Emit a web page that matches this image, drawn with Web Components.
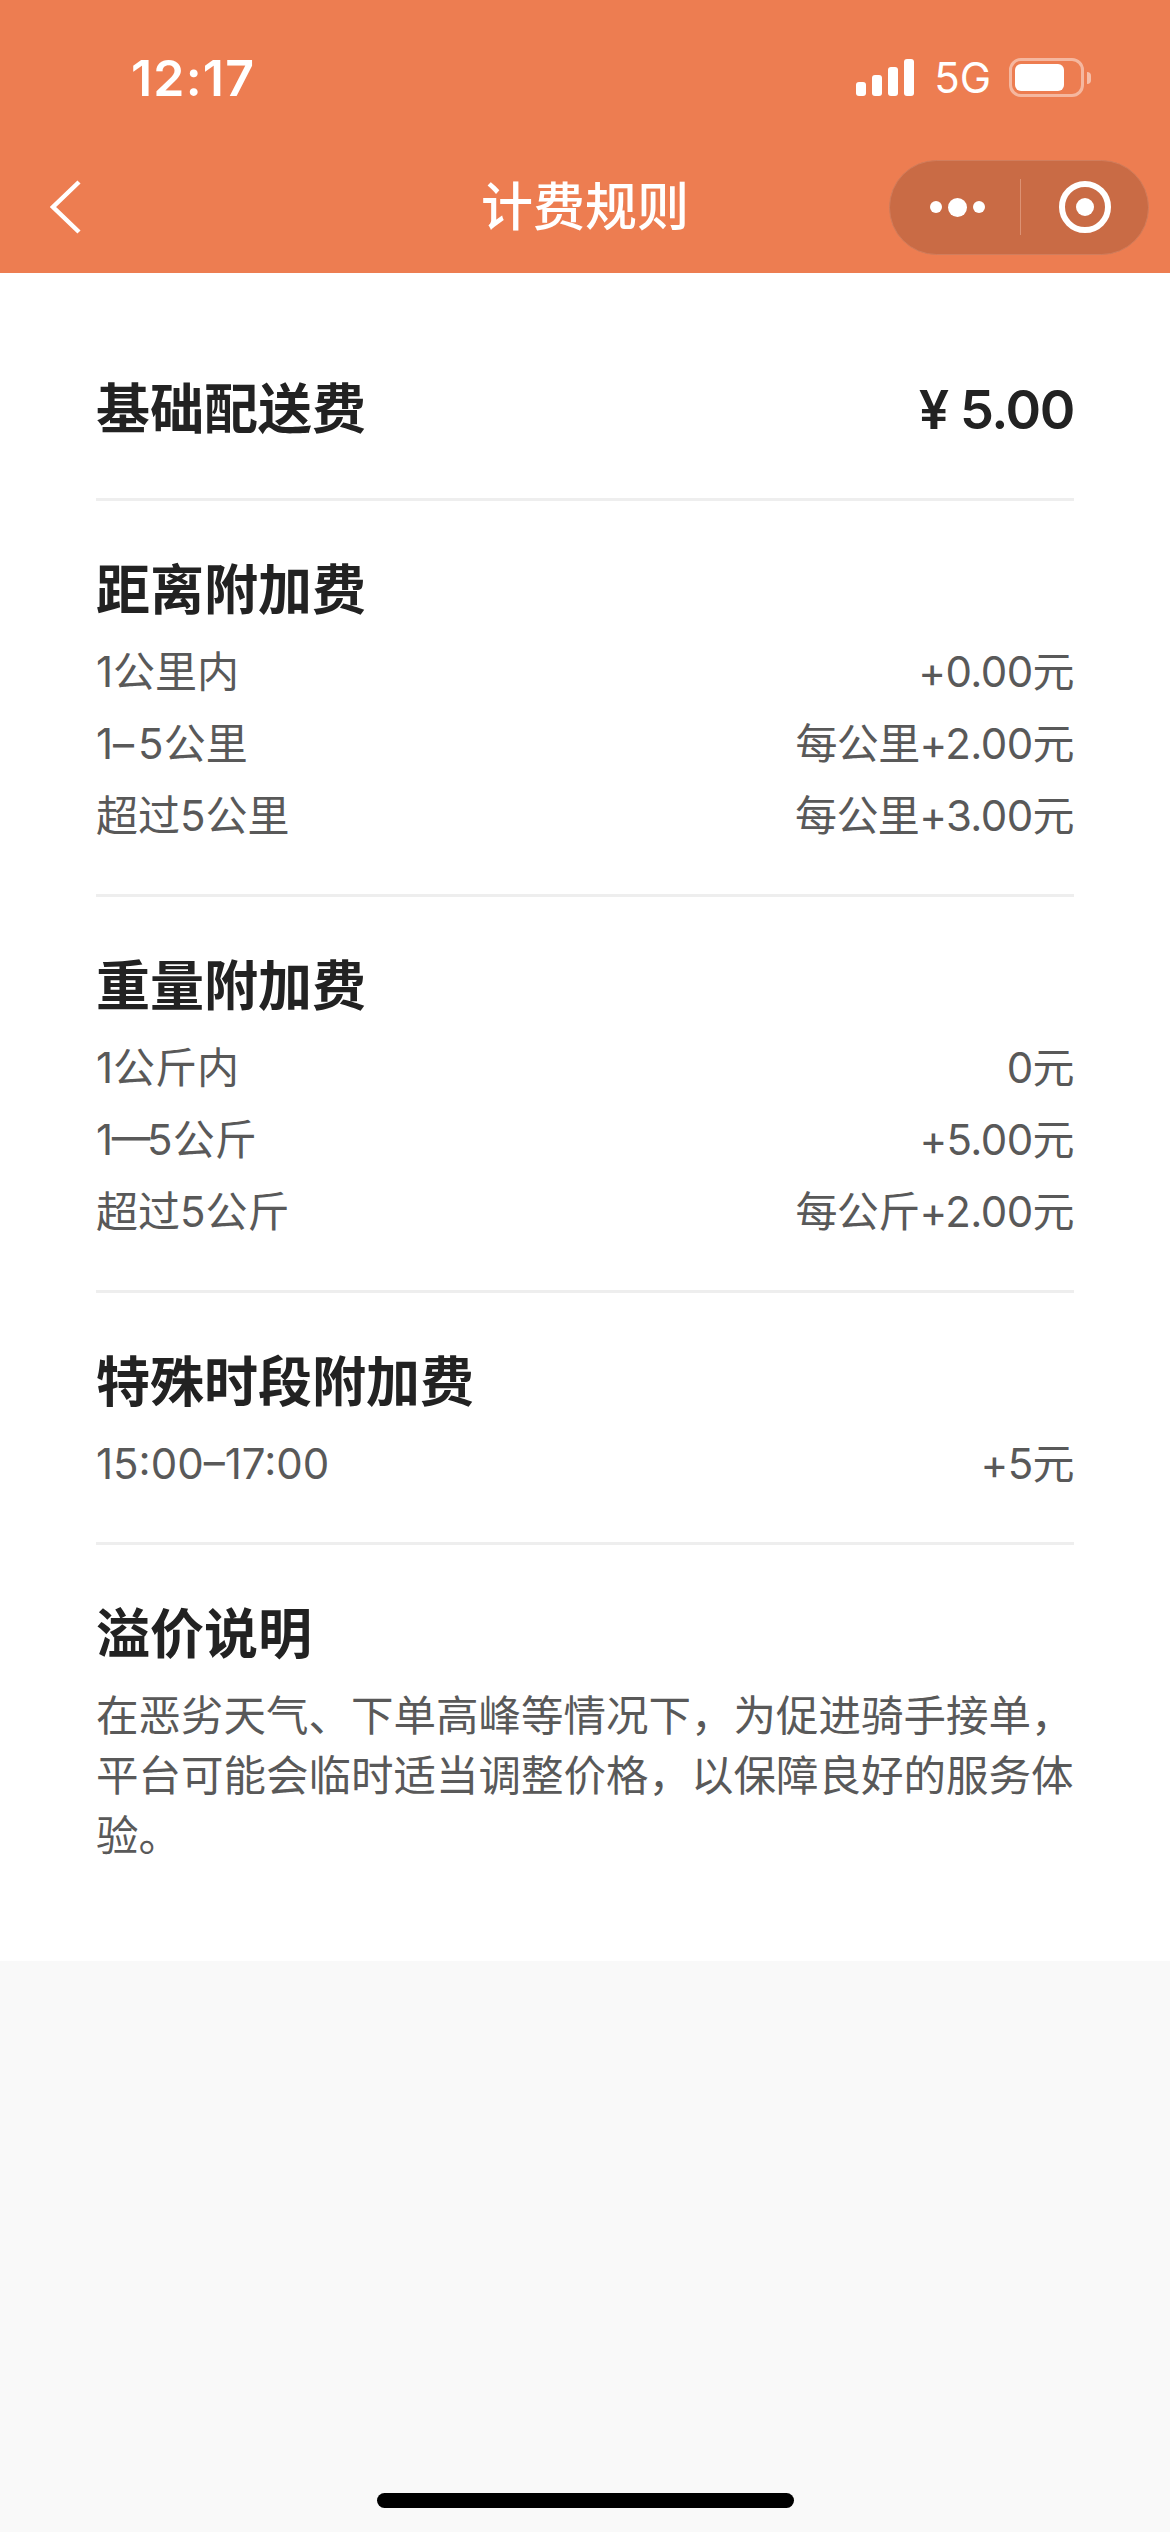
<!DOCTYPE html>
<html lang="zh-CN">
<head>
<meta charset="utf-8">
<title>计费规则</title>
<style>
  html, body { margin: 0; padding: 0; background: #f9f9f9; }
  body { font-family: "Inter", "Noto Sans CJK SC", sans-serif; }
  .dash { letter-spacing: 4px; }
  .bar { letter-spacing: -5px; margin-left: -3px; }
</style>
</head>
<body>
<rule-page>
  <app-header title="计费规则"></app-header>
  <fee-card>
    <fee-section divider>
      <fee-row heading>
        基础配送费
        <span slot="value">¥ 5.00</span>
      </fee-row>
    </fee-section>
    <fee-section divider heading="距离附加费">
      <fee-row>1公里内<span slot="value">+0.00元</span></fee-row>
      <fee-row>1<span class="dash">–</span>5公里<span slot="value">每公里+2.00元</span></fee-row>
      <fee-row>超过5公里<span slot="value">每公里+3.00元</span></fee-row>
    </fee-section>
    <fee-section divider heading="重量附加费">
      <fee-row>1公斤内<span slot="value">0元</span></fee-row>
      <fee-row>1<span class="bar">一</span>5公斤<span slot="value">+5.00元</span></fee-row>
      <fee-row>超过5公斤<span slot="value">每公斤+2.00元</span></fee-row>
    </fee-section>
    <fee-section divider heading="特殊时段附加费">
      <fee-row>15:00–17:00<span slot="value">+5元</span></fee-row>
    </fee-section>
    <fee-section heading="溢价说明">
      <fee-note>在恶劣天气、下单高峰等情况下，为促进骑手接单，平台可能会临时适当调整价格，以保障良好的服务体验。</fee-note>
    </fee-section>
  </fee-card>
  <home-bar></home-bar>
</rule-page>

<script>
class RulePage extends HTMLElement {
  constructor() {
    super();
    this.attachShadow({ mode: 'open' }).innerHTML = `
      <style>
        :host { display: flex; flex-direction: column; position: relative; height: 2532px; overflow: hidden; }
      </style>
      <slot></slot>`;
  }
}

class StatusBar extends HTMLElement {
  constructor() {
    super();
    this.attachShadow({ mode: 'open' }).innerHTML = `
      <style>
        :host { display: flex; align-items: center; height: 141px; padding: 14px 79px 0 131px; box-sizing: border-box; color: #fff; }
        .time { font-size: 50px; font-weight: 600; letter-spacing: 1.2px; line-height: 1; flex: 1; }
        .signal { display: flex; align-items: flex-end; gap: 6px; height: 37px; }
        .signal i { width: 10px; background: #fff; border-radius: 3px; }
        .net { font-size: 42px; line-height: 1; margin: 0 18px 0 20px; }
        .battery { display: flex; align-items: center; }
        .shell { width: 75px; height: 39px; box-sizing: border-box; padding: 3px; border: 3px solid rgba(255,255,255,.45); border-radius: 12px; }
        .level { width: 49px; height: 27px; background: #fff; border-radius: 6px; }
        .tip { width: 4px; height: 12px; margin-left: 3px; background: rgba(255,255,255,.5); border-radius: 0 4px 4px 0; }
      </style>
      <span class="time">12:17</span>
      <span class="signal">
        <i style="height:14px"></i><i style="height:21px"></i><i style="height:29px"></i><i style="height:37px"></i>
      </span>
      <span class="net">5G</span>
      <span class="battery"><span class="shell"><div class="level"></div></span><span class="tip"></span></span>`;
  }
}

class CapsuleMenu extends HTMLElement {
  constructor() {
    super();
    this.attachShadow({ mode: 'open' }).innerHTML = `
      <style>
        :host { display: flex; align-items: center; width: 260px; height: 95px; box-sizing: border-box; background: #c96b45; border: 1px solid #d17d5c; border-radius: 48px; }
        .more { flex: 0 0 130px; display: flex; justify-content: center; align-items: center; gap: 6px; padding-left: 4px; box-sizing: border-box; }
        .more i { width: 12px; height: 12px; background: #fff; border-radius: 50%; }
        .more i.big { width: 19px; height: 19px; }
        .sep { width: 1px; height: 56px; background: #dc9274; }
        .close { flex: 1; display: flex; justify-content: center; }
        svg { display: block; }
      </style>
      <div class="more"><i></i><i class="big"></i><i></i></div>
      <div class="sep"></div>
      <div class="close">
        <svg width="52" height="52" viewBox="0 0 52 52"><circle cx="26" cy="26" r="23" fill="none" stroke="#fff" stroke-width="6"/><circle cx="26" cy="26" r="9" fill="#fff"/></svg>
      </div>`;
  }
}

class AppHeader extends HTMLElement {
  constructor() {
    super();
    this.attachShadow({ mode: 'open' }).innerHTML = `
      <style>
        :host { display: block; background: #ed7d51; color: #fff; flex: none; }
        .nav { display: grid; grid-template-columns: 1fr auto 1fr; align-items: center; height: 132px; padding: 0 21px; }
        .back { display: block; margin-left: 29px; }
        h1 { margin: 0; padding-top: 2px; font-size: 52px; font-weight: 500; line-height: 1; }
        capsule-menu { justify-self: end; }
      </style>
      <status-bar></status-bar>
      <div class="nav">
        <svg class="back" width="32" height="54" viewBox="0 0 32 54"><path d="M29 2 L3 27 L29 52" fill="none" stroke="#fff" stroke-width="4.5"/></svg>
        <h1></h1>
        <capsule-menu></capsule-menu>
      </div>`;
    this.shadowRoot.querySelector('h1').textContent = this.getAttribute('title');
  }
}

class FeeCard extends HTMLElement {
  constructor() {
    super();
    this.attachShadow({ mode: 'open' }).innerHTML = `
      <style>
        :host { display: block; background: #fff; padding: 47px 96px 53px; flex: none; }
      </style>
      <slot></slot>`;
  }
}

class FeeSection extends HTMLElement {
  constructor() {
    super();
    const heading = this.getAttribute('heading');
    this.attachShadow({ mode: 'open' }).innerHTML = `
      <style>
        :host { display: block; padding: 54px 0 42px; }
        :host([divider]) { border-bottom: 3px solid #eee; }
        h2 { margin: 0 0 9px; font-size: 54px; font-weight: 700; line-height: 72px; color: #222; }
      </style>
      ${heading ? `<h2>${heading}</h2>` : ''}
      <slot></slot>`;
  }
}

class FeeRow extends HTMLElement {
  constructor() {
    super();
    this.attachShadow({ mode: 'open' }).innerHTML = `
      <style>
        :host { display: flex; justify-content: space-between; font-size: 42px; line-height: 72px; color: #595959; }
        :host([heading]) { font-size: 54px; font-weight: 700; color: #222; padding-bottom: 10px; }
        ::slotted([slot="value"]) { letter-spacing: -0.6px; }
        :host([heading]) ::slotted([slot="value"]) { font-weight: 600; letter-spacing: -1.4px; }
      </style>
      <div><slot></slot></div>
      <slot name="value"></slot>`;
  }
}

class FeeNote extends HTMLElement {
  constructor() {
    super();
    this.attachShadow({ mode: 'open' }).innerHTML = `
      <style>
        :host { display: block; margin-top: 15px; font-size: 42.5px; line-height: 60px; color: #595959; }
      </style>
      <slot></slot>`;
  }
}

class HomeBar extends HTMLElement {
  constructor() {
    super();
    this.attachShadow({ mode: 'open' }).innerHTML = `
      <style>
        :host { position: absolute; left: 377px; bottom: 24px; width: 417px; height: 15px; background: #000; border-radius: 8px; }
      </style>`;
  }
}

customElements.define('rule-page', RulePage);
customElements.define('status-bar', StatusBar);
customElements.define('capsule-menu', CapsuleMenu);
customElements.define('app-header', AppHeader);
customElements.define('fee-card', FeeCard);
customElements.define('fee-section', FeeSection);
customElements.define('fee-row', FeeRow);
customElements.define('fee-note', FeeNote);
customElements.define('home-bar', HomeBar);
</script>
</body>
</html>
